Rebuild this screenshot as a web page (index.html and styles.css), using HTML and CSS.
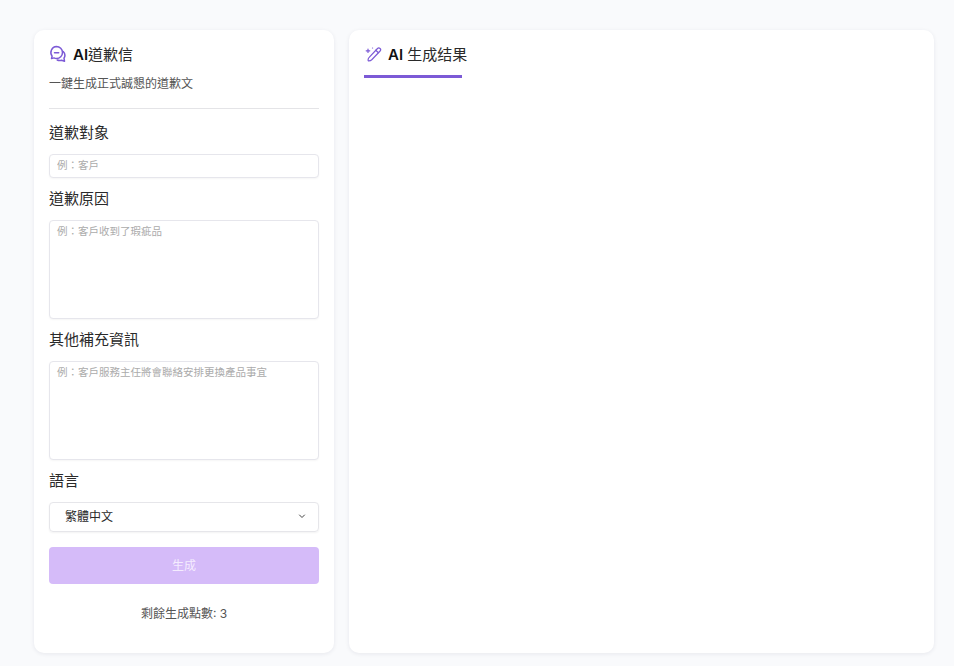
FILE: index.html
```html
<!DOCTYPE html>
<html lang="zh-Hant">
<head>
    <meta charset="UTF-8">
    <meta name="viewport" content="width=device-width, initial-scale=1.0">
    <title>AI道歉信</title>
    <link rel="stylesheet" href="styles.css">
</head>
<body>
    <div class="page">
        <div class="card form-card">
            <div class="card-title">
                <svg class="icon" width="18" height="18" viewBox="0 0 18 18" fill="none" stroke="#7c5ad6" stroke-width="1.5" stroke-linecap="round" stroke-linejoin="round">
                    <path d="M7.500 1.500a6 6 0 0 1 0 12c-.9 0-1.800-.2-2.500-.6l-2.500.7.600-2.500a6 6 0 0 1 4.400-9.600z"/>
                    <path d="M5.500 7.800h4.200"/>
                    <path d="M14.200 6.500a5.500 5.500 0 0 1 .8 6.700l.5 3-3-1a5.500 5.500 0 0 1-4.300-.2"/>
                </svg>
                <span class="heading-text"><b>AI</b>道歉信</span>
            </div>
            <p class="subtitle">一鍵生成正式誠懇的道歉文</p>
            <hr class="divider">
            <label class="field-label first">道歉對象</label>
            <input class="text-input" type="text" placeholder="例：客戶">
            <label class="field-label">道歉原因</label>
            <textarea class="text-area" placeholder="例：客戶收到了瑕疵品"></textarea>
            <label class="field-label">其他補充資訊</label>
            <textarea class="text-area" placeholder="例：客戶服務主任將會聯絡安排更換產品事宜"></textarea>
            <label class="field-label">語言</label>
            <div class="select-box">
                <span>繁體中文</span>
                <svg width="10" height="10" viewBox="0 0 10 10" fill="none" stroke="#444" stroke-width="1" stroke-linecap="round" stroke-linejoin="round">
                    <path d="M2.500 4 5 6.500 7.500 4"/>
                </svg>
            </div>
            <button class="generate-button" disabled>生成</button>
            <p class="points">剩餘生成點數: 3</p>
        </div>
        <div class="card result-card">
            <div class="tab">
                <svg class="icon" width="18" height="18" viewBox="0 0 18 18" fill="none" stroke="#7c5ad6" stroke-width="1.200" stroke-linecap="round" stroke-linejoin="round">
                    <path d="M13.500 3.500a1.800 1.800 0 0 1 2.600 2.500L8 14.500c-.7.700-2.800 1.500-3.700 1.400-.4-1 .4-3 1.100-3.700z"/>
                    <path d="M11.800 5.200l2.600 2.500"/>
                    <path d="M4 4v3.500M2.200 5.800h3.600"/>
                    <path d="M8.500 3h.1"/>
                </svg>
                <span class="heading-text"><b>AI</b> 生成结果</span>
            </div>
        </div>
    </div>
</body>
</html>
```

FILE: styles.css
```css
body {
    margin: 0;
    height: 666px;
    overflow: hidden;
    background-color: #f9fafc;
    font-family: Inter, "Noto Sans CJK TC", sans-serif;
    color: #2a2a2a;
}
.page {
    display: flex;
    gap: 15px;
    padding: 30px 20px 13px 34px;
    height: 666px;
    box-sizing: border-box;
}
.card {
    background-color: white;
    border-radius: 10px;
    box-shadow: 0 1px 4px rgba(30, 30, 60, 0.08);
    box-sizing: border-box;
}
.form-card {
    width: 300px;
    padding: 14px 15px;
    display: flex;
    flex-direction: column;
}
.result-card {
    flex: 1;
    padding: 0 15px;
}
.card-title {
    display: flex;
    align-items: center;
    gap: 6px;
    height: 20px;
    font-size: 15px;
}
.heading-text {
    margin-top: -2px;
}
.icon {
    flex: none;
}
b {
    font-weight: 600;
    color: #111;
}
.subtitle {
    margin: 11px 0 0;
    font-size: 12px;
    line-height: 18px;
    color: #555;
}
.divider {
    width: 100%;
    margin: 15px 0 0;
    border: none;
    border-top: 1px solid #e4e4e7;
}
.field-label {
    display: block;
    font-size: 15px;
    line-height: 20px;
    margin-top: 11px;
    margin-bottom: 11px;
}
.field-label.first {
    margin-top: 14px;
}
.text-input,
.text-area {
    display: block;
    width: 100%;
    box-sizing: border-box;
    border: 1px solid #e6e6ec;
    border-radius: 4px;
    padding: 4px 7px;
    font-family: inherit;
    font-size: 10.5px;
    line-height: 14px;
    outline: none;
    resize: none;
    background-color: white;
    box-shadow: 0 1px 2px rgba(0, 0, 0, 0.04);
}
.text-input {
    height: 24px;
    padding-bottom: 6px;
}
.text-area {
    height: 99px;
}
.text-input::placeholder,
.text-area::placeholder {
    color: #ababab;
}
.select-box {
    display: flex;
    justify-content: space-between;
    align-items: center;
    height: 30px;
    box-sizing: border-box;
    padding: 0 11px 3px 15px;
    border: 1px solid #e6e6ea;
    border-radius: 4px;
    font-size: 12px;
    box-shadow: 0 1px 2px rgba(0, 0, 0, 0.05);
}
.generate-button {
    height: 37px;
    margin-top: 15px;
    padding: 0 0 2px;
    border: none;
    border-radius: 4px;
    background-color: #d5bbf9;
    color: #f4ecfe;
    font-family: inherit;
    font-size: 12px;
}
.points {
    margin: 21px 0 0;
    text-align: center;
    font-size: 12px;
    line-height: 18px;
    color: #555;
}
.tab {
    display: flex;
    align-items: center;
    gap: 6px;
    width: 98px;
    height: 48px;
    padding-top: 3px;
    box-sizing: border-box;
    border-bottom: 3px solid #7c5ad6;
    font-size: 15px;
    white-space: nowrap;
}
```
